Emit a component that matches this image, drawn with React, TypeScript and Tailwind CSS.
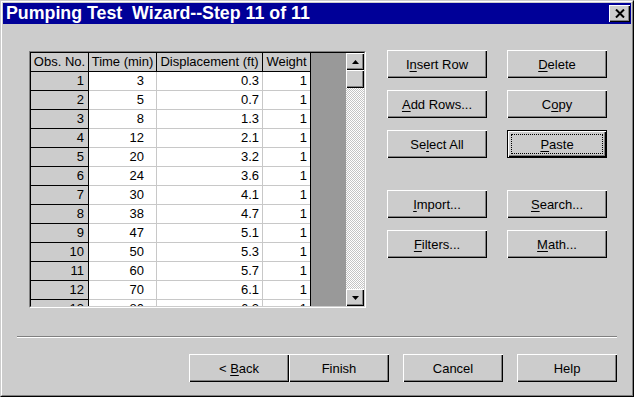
import React from "react";

const rows: [string, string, string, string][] = [
  ["1", "3", "0.3", "1"],
  ["2", "5", "0.7", "1"],
  ["3", "8", "1.3", "1"],
  ["4", "12", "2.1", "1"],
  ["5", "20", "3.2", "1"],
  ["6", "24", "3.6", "1"],
  ["7", "30", "4.1", "1"],
  ["8", "38", "4.7", "1"],
  ["9", "47", "5.1", "1"],
  ["10", "50", "5.3", "1"],
  ["11", "60", "5.7", "1"],
  ["12", "70", "6.1", "1"],
  ["13", "80", "6.3", "1"],
];

function WinButton({ children, def }: { children: React.ReactNode; def?: boolean }) {
  if (def) {
    return (
      <div className="relative w-[100px] h-[28px] border border-black bg-[#cccccc] shadow-[inset_1px_1px_0_#ffffff,inset_-1px_-1px_0_#000000,inset_-2px_-2px_0_#808080] flex items-center justify-center text-[13px] leading-none text-black">
        <div className="absolute left-[3px] top-[3px] right-[3px] bottom-[3px] border border-dotted border-black" />
        <span className="relative">{children}</span>
      </div>
    );
  }
  return (
    <div className="w-[100px] h-[28px] bg-[#cccccc] shadow-[inset_1px_1px_0_#ffffff,inset_-1px_-1px_0_#000000,inset_-2px_-2px_0_#808080] flex items-center justify-center text-[13px] leading-none text-black">
      <span>{children}</span>
    </div>
  );
}

function U({ children }: { children: React.ReactNode }) {
  return <span className="underline underline-offset-[2px]">{children}</span>;
}

function Arrow({ up }: { up?: boolean }) {
  return (
    <svg width="7" height="4" viewBox="0 0 7 4">
      {up ? <polygon points="3.5,0 7,4 0,4" fill="#000" /> : <polygon points="0,0 7,0 3.5,4" fill="#000" />}
    </svg>
  );
}

function ScrollBtn({ children, h }: { children?: React.ReactNode; h: string }) {
  return (
    <div
      className={`${h} w-full bg-[#cccccc] shadow-[inset_1px_1px_0_#ffffff,inset_-1px_-1px_0_#000000,inset_-2px_-2px_0_#808080] flex items-center justify-center`}
    >
      {children}
    </div>
  );
}

function Grid() {
  return (
    <div className="w-[337px] h-[257px] border border-t-[#808080] border-l-[#808080] border-r-white border-b-white">
      <div className="w-full h-full border border-t-black border-l-black border-r-[#cccccc] border-b-[#cccccc] flex overflow-hidden">
        <div className="w-[280px] h-full flex flex-col border-r border-black overflow-hidden text-[13px] text-black">
          <div className="flex h-[19px] shrink-0 border-b border-black bg-[#cccccc] leading-[18px]">
            <div className="w-[58px] border-r border-black text-center whitespace-nowrap overflow-hidden">Obs. No.</div>
            <div className="w-[68px] border-r border-black text-center whitespace-nowrap overflow-hidden">Time (min)</div>
            <div className="w-[106px] border-r border-black text-center whitespace-nowrap overflow-hidden">Displacement (ft)</div>
            <div className="w-[47px] text-center whitespace-nowrap overflow-hidden">Weight</div>
          </div>
          {rows.map((r) => (
            <div key={r[0]} className="flex h-[19px] shrink-0 leading-[18px]">
              <div className="w-[58px] bg-[#cccccc] border-r border-b border-black text-right pr-[4px]">{r[0]}</div>
              <div className="w-[68px] bg-white border-r border-b border-[#c8c8c8] text-right pr-[12px]">{r[1]}</div>
              <div className="w-[106px] bg-white border-r border-b border-[#c8c8c8] text-right pr-[3px]">{r[2]}</div>
              <div className="w-[47px] bg-white border-b border-[#c8c8c8] text-right pr-[3px]">{r[3]}</div>
            </div>
          ))}
        </div>
        <div className="w-[35px] h-full bg-[#999999]" />
        <div className="w-[18px] h-full flex flex-col">
          <ScrollBtn h="h-[17px]">
            <Arrow up />
          </ScrollBtn>
          <ScrollBtn h="h-[18px]" />
          <div className="flex-1 bg-[image:repeating-conic-gradient(#ffffff_0%_25%,#c4c4c4_0%_50%)] bg-[length:2px_2px]" />
          <ScrollBtn h="h-[17px]">
            <Arrow />
          </ScrollBtn>
        </div>
      </div>
    </div>
  );
}

export default function App() {
  return (
    <div className="w-[634px] h-[397px] bg-[#cccccc] border border-t-[#cccccc] border-l-[#cccccc] border-r-black border-b-black font-['Liberation_Sans',Arial,sans-serif]">
      <div className="w-full h-full border border-t-white border-l-white border-r-[#808080] border-b-[#808080] p-[1px] flex flex-col">
        <div className="h-[21px] shrink-0 bg-[#000098] flex items-center justify-between pl-[3px] pr-[1px]">
          <span className="text-white font-bold text-[17.8px] leading-[21px] whitespace-pre">Pumping Test  Wizard--Step 11 of 11</span>
          <div className="w-[21px] h-[17px] bg-[#cccccc] shadow-[inset_1px_1px_0_#ffffff,inset_-1px_-1px_0_#000000,inset_-2px_-2px_0_#808080] flex items-center justify-center">
            <svg width="10" height="9" viewBox="0 0 10 9">
              <path d="M1 0.5 L9 8.5 M9 0.5 L1 8.5" stroke="#000" strokeWidth="2" />
            </svg>
          </div>
        </div>

        <div className="flex items-start">
          <div className="ml-[26px] mt-[27px]">
            <Grid />
          </div>
          <div className="ml-[21px] mt-[26px] flex flex-col">
            <div className="grid grid-cols-[100px_100px] gap-x-[20px] gap-y-[12px]">
              <WinButton>
                I<U>n</U>sert Row
              </WinButton>
              <WinButton>
                <U>D</U>elete
              </WinButton>
              <WinButton>
                <U>A</U>dd Rows...
              </WinButton>
              <WinButton>
                C<U>o</U>py
              </WinButton>
              <WinButton>
                Se<U>l</U>ect All
              </WinButton>
              <WinButton def>
                <U>P</U>aste
              </WinButton>
            </div>
            <div className="mt-[32px] grid grid-cols-[100px_100px] gap-x-[20px] gap-y-[12px]">
              <WinButton>
                <U>I</U>mport...
              </WinButton>
              <WinButton>
                <U>S</U>earch...
              </WinButton>
              <WinButton>
                <U>F</U>ilters...
              </WinButton>
              <WinButton>
                <U>M</U>ath...
              </WinButton>
            </div>
          </div>
        </div>

        <div className="ml-[14px] mt-[28px] w-[600px] h-[2px] border-t border-t-[#808080] border-b border-b-white" />

        <div className="ml-[186px] mt-[16px] flex">
          <WinButton>
            &lt; <U>B</U>ack
          </WinButton>
          <WinButton>Finish</WinButton>
          <div className="ml-[14px]">
            <WinButton>Cancel</WinButton>
          </div>
          <div className="ml-[14px]">
            <WinButton>Help</WinButton>
          </div>
        </div>
      </div>
    </div>
  );
}
